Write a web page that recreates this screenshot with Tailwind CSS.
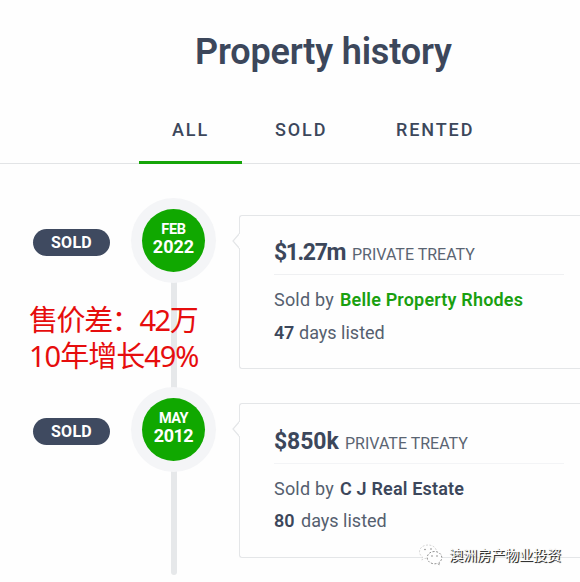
<!DOCTYPE html>
<html lang="en">
<head>
  <meta charset="UTF-8" />
  <meta name="viewport" content="width=device-width, initial-scale=1.0" />
  <title>Property history</title>
  <script src="https://cdn.jsdelivr.net/npm/@tailwindcss/browser@4"></script>
</head>
<body class="h-[582px] overflow-hidden bg-[#fefefe] font-['Roboto','Noto_Sans_CJK_SC',sans-serif] text-[#3c475b]">

  <header class="border-b border-[#e2e4e6] h-[164px] flex flex-col justify-between">
    <h1 class="pt-[31px] pl-[195px] text-[36px] leading-[42px] font-semibold tracking-[-0.17px] whitespace-nowrap">Property history</h1>
    <nav class="flex pl-[139px] text-[18px] leading-6 font-medium tracking-[1.9px] -mb-px">
      <a href="#" class="w-[103px] h-[46px] pl-[33px] border-b-3 border-[#16a50a]">ALL</a>
      <a href="#" class="w-[120px] h-[46px] pl-[33px]">SOLD</a>
      <a href="#" class="h-[46px] pl-[34px]">RENTED</a>
    </nav>
  </header>

  <main class="relative pt-[34px]">
    <!-- timeline rail -->
    <div class="absolute left-[171px] top-[80px] h-[331px] w-[6px] rounded-full bg-[#e6e8ea]"></div>

    <section class="relative flex h-[188px] items-start">
      <div class="w-[131px] shrink-0 pl-[33px] pt-[31px]">
        <span class="flex h-[27px] w-[77px] items-center justify-center rounded-full bg-[#3f4a60] text-[16px] font-bold tracking-[0.3px] text-white">SOLD</span>
      </div>
      <div class="flex size-[85px] shrink-0 items-center justify-center rounded-full bg-[#f4f5f7]">
        <div class="flex size-[63px] flex-col items-center justify-center rounded-full bg-[#10a800] pb-[4px] text-white font-bold">
          <span class="text-[14.5px] leading-[17px] tracking-[-0.3px]">FEB</span>
          <span class="text-[18px] leading-[18px]">2022</span>
        </div>
      </div>
      <article class="relative mt-[17px] ml-[23px] h-[154px] flex-1 rounded-l-[3px] border border-r-0 border-[#e4e6e8] bg-[#fefefe] pl-[34px] pr-4">
        <svg class="absolute -left-[8px] top-[16px]" width="9" height="18" viewBox="0 0 9 18" fill="none">
          <path d="M8.5 1L1 9l7.500 8z" fill="#fefefe" />
          <path d="M7.500 1.500L1 9l6.500 7.500" stroke="#e4e6e8" stroke-width="1.200" />
          <path d="M8 2v14" stroke="#fefefe" stroke-width="2" />
        </svg>
        <div class="flex h-[59px] items-baseline border-b border-[#eff0f2] pt-[23px] whitespace-nowrap">
          <strong class="w-[78px] shrink-0 text-[23px] leading-[28px] font-bold tracking-[-1.4px]">$1.27m</strong>
          <span class="text-[16px] text-[#5a6472]">PRIVATE TREATY</span>
        </div>
        <p class="flex pt-[13px] text-[18px] leading-6 whitespace-nowrap">
          <span class="w-[66px] tracking-[0.2px] text-[#55606f]">Sold by</span>
          <a href="#" class="font-semibold tracking-[0.17px] text-[#1aa010]">Belle Property Rhodes</a>
        </p>
        <p class="flex pt-[9px] text-[18px] leading-6 whitespace-nowrap">
          <strong class="w-[25px] font-semibold tracking-[-0.3px]">47</strong>
          <span class="text-[#55606f]">days listed</span>
        </p>
      </article>
    </section>

    <section class="relative flex h-[188px] items-start">
      <div class="w-[131px] shrink-0 pl-[33px] pt-[32px]">
        <span class="flex h-[27px] w-[77px] items-center justify-center rounded-full bg-[#3f4a60] text-[16px] font-bold tracking-[0.3px] text-white">SOLD</span>
      </div>
      <div class="mt-px flex size-[85px] shrink-0 items-center justify-center rounded-full bg-[#f4f5f7]">
        <div class="flex size-[63px] flex-col items-center justify-center rounded-full bg-[#10a800] pb-[4px] text-white font-bold">
          <span class="text-[14.5px] leading-[17px] tracking-[-0.5px]">MAY</span>
          <span class="text-[18px] leading-[18px] tracking-[-0.5px]">2012</span>
        </div>
      </div>
      <article class="relative mt-[17px] ml-[23px] h-[155px] flex-1 rounded-l-[3px] border border-r-0 border-[#e4e6e8] bg-[#fefefe] pl-[34px] pr-4">
        <svg class="absolute -left-[8px] top-[16px]" width="9" height="18" viewBox="0 0 9 18" fill="none">
          <path d="M8.5 1L1 9l7.500 8z" fill="#fefefe" />
          <path d="M7.500 1.500L1 9l6.500 7.500" stroke="#e4e6e8" stroke-width="1.200" />
          <path d="M8 2v14" stroke="#fefefe" stroke-width="2" />
        </svg>
        <div class="flex h-[60px] items-baseline border-b border-[#f3f4f6] pt-[24px] whitespace-nowrap">
          <strong class="w-[71px] shrink-0 text-[23px] leading-[28px] font-bold tracking-[-0.1px]">$850k</strong>
          <span class="text-[16px] text-[#5a6472]">PRIVATE TREATY</span>
        </div>
        <p class="flex pt-[13px] text-[18px] leading-6 whitespace-nowrap">
          <span class="w-[66px] tracking-[0.2px] text-[#55606f]">Sold by</span>
          <strong class="font-semibold tracking-[0.17px]">C J Real Estate</strong>
        </p>
        <p class="flex pt-[8px] text-[18px] leading-6 whitespace-nowrap">
          <strong class="w-[27px] font-semibold">80</strong>
          <span class="text-[#55606f]">days listed</span>
        </p>
      </article>
    </section>
  </main>

  <!-- red note over the timeline -->
  <div class="absolute left-[29px] top-[302px] font-['Noto_Sans','Noto_Sans_CJK_SC',sans-serif] text-[29px] leading-[36px] text-[#e60d0d] whitespace-nowrap">
    <p class="tracking-[-1.4px]">售价差：42万</p>
    <p class="tracking-[-1px]">10年增长49%</p>
  </div>

  <!-- account watermark -->
  <div class="absolute left-[418px] top-[542px] flex items-center gap-[6px]">
    <svg width="25" height="25" viewBox="0 0 25 25" fill="#fefefe" stroke="#777" stroke-width=".8" stroke-dasharray="2 1.500">
      <path d="M10 3c-5 0-8.500 3-8.500 6.800 0 2.200 1.200 4 3 5.200l-.8 3 3.200-1.700c1 .3 2 .4 3.100.4 5 0 8.500-3 8.500-6.900S15 3 10 3z" stroke="#ccc" />
      <path d="M16.500 9.500c-4.200 0-7.300 2.700-7.300 6.100s3.100 6.200 7.300 6.200c.9 0 1.800-.1 2.600-.4l2.700 1.500-.7-2.500c1.700-1.100 2.700-2.800 2.700-4.800 0-3.400-3.100-6.100-7.300-6.100z" />
      <g fill="#888" stroke="none">
        <circle cx="7" cy="7.500" r=".8" /><circle cx="13" cy="7" r=".8" />
        <circle cx="14" cy="14" r=".8" /><circle cx="19" cy="14" r=".8" />
      </g>
    </svg>
    <span class="-mt-[2px] font-['Noto_Sans_CJK_SC',sans-serif] text-[14px] leading-6 text-[#fefefe] [text-shadow:1px_1px_0_#333,1px_1px_1px_#555] whitespace-nowrap">澳洲房产物业投资</span>
  </div>
</body>
</html>
